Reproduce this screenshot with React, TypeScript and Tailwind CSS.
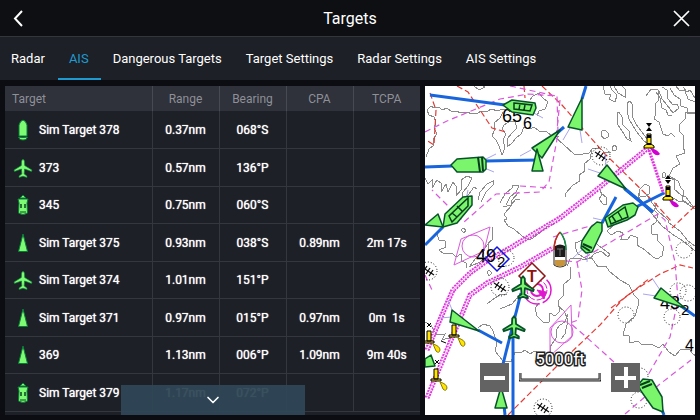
import { ChevronDown } from 'lucide-react'

type TargetKind = 'vessel' | 'aircraft' | 'tug' | 'sail'

interface Target {
  kind: TargetKind
  name: string
  range: string
  bearing: string
  cpa?: string
  tcpa?: string
}

const tabs = ['Radar', 'AIS', 'Dangerous Targets', 'Target Settings', 'Radar Settings', 'AIS Settings']

const columns = ['Range', 'Bearing', 'CPA', 'TCPA']

const targets: Target[] = [
  { kind: 'vessel', name: 'Sim Target 378', range: '0.37nm', bearing: '068°S' },
  { kind: 'aircraft', name: '373', range: '0.57nm', bearing: '136°P' },
  { kind: 'tug', name: '345', range: '0.75nm', bearing: '060°S' },
  { kind: 'sail', name: 'Sim Target 375', range: '0.93nm', bearing: '038°S', cpa: '0.89nm', tcpa: '2m 17s' },
  { kind: 'aircraft', name: 'Sim Target 374', range: '1.01nm', bearing: '151°P' },
  { kind: 'sail', name: 'Sim Target 371', range: '0.97nm', bearing: '015°P', cpa: '0.97nm', tcpa: '0m  1s' },
  { kind: 'sail', name: '369', range: '1.13nm', bearing: '006°P', cpa: '1.09nm', tcpa: '9m 40s' },
  { kind: 'tug', name: 'Sim Target 379', range: '1.17nm', bearing: '072°P' },
]

const planePath =
  'M0 -9 L1.5 -7 L1.7 -2.5 L9 2 L8.5 3.5 L1.6 1 L1.2 6 L4 8 L4 9.5 L0 8.3 L-4 9.5 L-4 8 L-1.2 6 L-1.6 1 L-8.5 3.5 L-9 2 L-1.7 -2.5 L-1.5 -7 Z'

// depth contours
const contours = [
  'M427 110 l4 -4 3 2 5 -1 3 3 5 -2 4 3 6 0 3 2 7 -1 5 2 6 -1 3 -2 6 1 4 -3 7 2 4 -2 5 0 3 -3 4 2',
  'M427 110 l2 5 5 2 2 6 -2 5 3 6 -4 5 1 6 -5 4 -3 8',
  'M503 112 l-3 6 -6 5 0 8 -2 5 4 4 3 6 3 9 3 -7 -2 -8 3 -6 -4 -5 2 -4 6 -4 5 1 2 6 -5 5 -5 6 0 8 5 -4 4 -5 5 -4 3 -7 6 2 4 -2 5 4 8 1 5 4 7 1',
  'M530 100 l3 -4 6 -3 4 5 5 4 -3 7 -6 2 -2 5',
  'M474 86 l5 4 6 -3 -2 -1',
  'M425 178 l3 6 4 -4 0 8 5 -8 4 3 0 9 5 -8 2 8 5 -10 3 4 0 10 5 -6 0 -10 6 -4 5 2 -4 8 -5 6 -1 9 4 -3 8 -11 3 2',
  'M478 200 l2 -8 7 -8 6 -3 0 4 -7 7 -5 10 M500 203 l5 -9 7 -6 1 -3 6 1 -3 6 -6 5 -4 8 M503 207 l8 -2 5 -6 4 0',
  'M519 192 l-8 9 1 4 -8 9 3 5 -3 1 4 6 6 3 8 7 7 4 4 -2 9 -7 7 -6 5 -1',
  'M437 234 l2 6 6 1 1 6 -7 3 5 4 8 -1 4 4 5 -3 1 7 4 2 0 5',
  'M492 227 l0 13 -4 3 0 12 -8 7 -11 5 7 -9 6 -1 3 -9 5 -7',
  'M555 137 l9 8 10 9 4 1 11 -2 4 -5 7 0 4 4 7 1',
  'M592 150 l-2 9 -6 5 1 7 -6 4 1 6 -7 4 -7 8 -1 4',
  'M603 86 l2 8 6 1 -2 4 6 3 2 -7 -5 -5 -2 -4 M614 86 l4 7 7 4 0 -8 -3 -3',
  'M627 103 l3 -2 3 4 -1 11 4 8 6 8 10 14 -8 -5 -8 -10 -7 -12 -2 -8 z',
  'M617 113 l2 -1 3 5 0 7 5 5 3 3 -1 4 2 5 -4 -2 -5 -8 -4 -6 z',
  'M605 130 l3 3 0 4 -4 2 -3 -4 1 -4 z',
  'M646 96 l5 -7 7 1 1 10 -4 4 1 9 -2 6 5 3 4 12 5 2 3 -3 4 4 M656 92 l4 6 2 10 4 2 2 5 4 0',
  'M662 87 l5 3 1 9 5 6 4 -1 2 4 -6 5 -6 -8 -5 -6 -3 -8 M670 88 l4 7 6 4 1 7 6 2 0 5 8 1',
  'M676 86 l3 4 6 1 3 8 7 3 M683 87 l4 5 3 -2 5 8',
  'M695 113 l-9 -1 -1 7 -6 6 0 6 5 5 -1 10 2 7 -9 3 4 8 -7 4 -4 8 9 5 3 7 3 3 -2 9 7 4',
  'M674 198 l5 4 4 -1 12 8 M668 177 l6 3 0 9 7 6 5 2 9 12',
  'M645 184 l-6 6 1 6 5 1 4 -3 0 -8 z',
  'M662 174 l2 -2 2 2 -1 3 -3 0 z M612 148 l2 -3 3 2 -1 3 -4 1 z M461 230 l2 -2 3 2 -2 3 z M487 272 l2 -2 3 3 -3 3 z',
  'M640 190 l-2 6 6 9 8 9 10 12 10 8 11 7 12 10 M646 194 l11 16 11 10 1 3 11 8 8 10 7 5',
  'M600 190 l2 5 -3 4 4 5 3 0 0 -7 -4 -3',
  'M622 222 l-7 2 -8 7 4 4 7 -4 5 2 -2 6 7 0 3 -4 7 3 -1 7 8 5 8 7 4 2 5 -3 2 -9 -7 -7 1 -5 -6 -1 -1 -8 5 -4 2 -8 -4 -4 3 -7',
  'M575 247 l0 -4 8 -3 6 5 6 -3 4 4 11 8 -2 3 -7 -6 -7 3 -4 5 -5 -1 -7 -4 z',
  'M567 266 l3 -7 9 -1 6 2 6 -3 7 10 8 -1 3 5 11 9 9 5 5 10 4 4 0 7 -3 10 -9 8 -3 11 6 1 1 7 8 -2 4 4 9 -1 8 4 4 -4 6 8 6 4 6 -7 8 0 4 5 6 4 3 6 -2 8',
  'M570 267 l0 12 -7 6 1 10 -6 6 2 10 -5 5 -5 -3 -1 9 -6 0 -6 -6 -2 -8 4 -5 M558 306 l6 5 4 9 -3 14 -4 5',
  'M425 322 l6 3 5 10 9 -1 -3 6 10 -3 M478 328 l5 -4 7 2 3 5 4 12 -2 8 8 10 8 1 4 -10 7 0 3 -2 5 4 5 -3 9 6 7 -1 -1 -9 6 -9 0 -8 4 -5 5 -3 3 -8',
  'M487 304 l8 -6 6 -4 6 1 M500 309 l12 -5 5 -6',
]

// zigzag bands marking the cable areas
const bands = [
  'M427 350 L445 308 L453 290 L470 273 L488 260 L510 248 L560 218 L595 191 L648 148',
  'M427 398 L462 314 L470 295 L487 283 L520 267 L553 248',
]

const redDashes = [
  'M457 86 L468 92 L492 128 L506 132',
  'M430 93 L436 110 L434 145 L426 140',
  'M524 86 L525 98',
  'M542 86 L562 105 L604 153 L652 200 L672 222',
  'M695 206 L672 228',
  'M611 308 L632 292 L660 274 L680 265 L693 268',
  'M508 415 L560 363 L600 325 L622 300 L650 278',
]

const magentaDashes = [
  'M425 132 L447 121 L500 99 L528 94 L557 96 L558 134 L549 182 L540 192 L496 194 L464 222 L432 190',
  'M560 100 L556 140',
  'M510 86 L556 96',
  'M556 260 L577 262 L658 214 L665 220 L675 262 L678 300 L670 337 L648 375',
  'M577 262 L582 290 L578 320 L570 323 L584 335 L645 390',
  'M553 237 L600 223',
  'M625 414 L660 384 L691 360',
  'M425 275 L432 290 M520 186 L552 188',
]

const predictors = [
  'M430 95 L505 105',
  'M425 167 L452 166 M486 161 L540 160',
  'M586 86 L582 99',
  'M425 245 L443 227',
  'M556 134 L564 127',
  'M624 188 L653 212',
  'M625 189 L653 212',
  'M616 197 L602 223',
  'M636 207 L664 193',
  'M521 293 L502 368',
  'M513 330 L513 415',
  'M478 330 L502 343',
  'M504 405 L505 415',
  'M662 410 L664 415',
  'M681 306 L695 316',
]

const trails = [
  'M496 154 L480 162 M494 172 L482 167 M531 150 L520 156 M570 128 L563 140 M580 130 L582 143 M588 169 L600 173 M605 154 L606 166 M593 218 L602 220 M573 258 L584 248 M587 262 L588 250 M652 278 L660 290 M643 294 L656 296 M448 300 L453 312 M440 318 L452 317 M465 205 L468 190 M532 112 L543 118',
]

const sails = [
  '582,98 568,127 582,130',
  '607,165 598,176 626,189',
  '560,130 532,148 542,158',
  '537,149 532,171 543,171',
  '438,214 425,225 443,227',
  '452,310 450,322 479,331',
  '501,387 495,408 507,408',
  '661,288 654,298 685,308',
  '425,359 431,355 435,366 425,367',
]

const hulls = [
  '451,165 457,159 483,157 486,160 486,169 483,172 457,172',
  '503,105 512,100 535,103 536,108 533,115 512,112',
  '472,196 472,205 457,223 443,227 445,214 463,197',
  '638,207 635,215 627,220 608,227 605,218 623,205 633,203',
  '597,222 602,223 602,231 592,252 586,253 581,248 582,241 591,227',
  '638,385 643,379 652,380 662,397 663,412 653,408 641,391',
]

const rocks = [
  { x: 601, y: 156, r: 9 },
  { x: 500, y: 287, r: 9 },
  { x: 428, y: 271, r: 9 },
  { x: 543, y: 408, r: 9 },
]

const rings = [
  { x: 684, y: 250, r: 8 },
  { x: 678, y: 291, r: 8 },
  { x: 688, y: 293, r: 8 },
  { x: 626, y: 315, r: 8 },
  { x: 672, y: 317, r: 8 },
  { x: 640, y: 376, r: 8 },
  { x: 639, y: 400, r: 8 },
  { x: 506, y: 258, r: 8 },
]

function TargetIcon({ kind }: { kind: TargetKind }) {
  return (
    <svg
      viewBox="-10 -11 20 22"
      className="h-[22px] w-5 shrink-0"
      fill="#7dfb72"
      stroke="#087c36"
      strokeWidth="1"
      aria-hidden="true"
    >
      {kind === 'vessel' && (
        <>
          <path d="M-4 6 V-5 Q-3 -9 0 -10 Q3 -9 4 -5 V6 Z" />
          <path d="M-4.500 7 Q0 8 4.500 7 L3 9.500 Q0 10.500 -3 9.500 Z" />
        </>
      )}
      {kind === 'aircraft' && <path d={planePath} strokeWidth="0.7" />}
      {kind === 'tug' && (
        <>
          <path d="M-3 -7 L0 -10 L3 -7 Z" />
          <path d="M-5 -6 H5 L4 -2 L4.500 8 Q0 11 -4.500 8 L-4 -2 Z" />
          <path d="M-2 -1 V3 M2 -1 V3" stroke="#07451f" strokeWidth="1.500" />
          <path d="M-3 7 H3" stroke="#07451f" />
        </>
      )}
      {kind === 'sail' && <path d="M0 -9 L4.500 8.500 H-4.500 Z" />}
    </svg>
  )
}

function Rock({ x, y, r }: { x: number; y: number; r: number }) {
  return (
    <g transform={`translate(${x} ${y})`} fill="none" stroke="#111">
      <circle r={r} strokeDasharray="1 2" />
      <path d="M-6 -4 L6 4 M-5 1 L-1 -5 M-2 3 L2 -3 M1 5 L5 -1" strokeWidth="1.300" />
    </g>
  )
}

function CardinalBuoy({ x, y, mark }: { x: number; y: number; mark: string }) {
  return (
    <g transform={`translate(${x} ${y})`}>
      <path d={mark} fill="#000" />
      <path d="M1 1 Q8 2 11 7 Q8 10 4 6 Z" fill="#d000d0" />
      <path d="M-2 -13 H2 V-3 L5 -1 V1 H-5 V-1 L-2 -3 Z" fill="#ffe500" stroke="#000" />
      <path d="M-2 -12 H2 V-9 H-2 Z M-2 -4 H2 V-2 H-2 Z" fill="#000" />
    </g>
  )
}

function LightBuoy({ x, y }: { x: number; y: number }) {
  return (
    <g transform={`translate(${x} ${y})`} stroke="#000" fill="#ffe500">
      <path d="M-2 -7 H2 V3 H-2 Z M-5 3 H5 V5 H-5 Z" />
      <path d="M4 6 Q11 8 11 12 Q10 16 7 13 Z" stroke="#8a7a00" />
    </g>
  )
}

function ChartDrawing() {
  return (
    <svg
      viewBox="425 86 270 329"
      preserveAspectRatio="xMidYMid slice"
      className="absolute inset-0 h-full w-full"
      role="img"
      aria-label="Chart with AIS targets"
    >
      <g fill="none" stroke="#8b8b8b" shapeRendering="crispEdges">
        {contours.map((d) => (
          <path key={d} d={d} />
        ))}
      </g>
      <g fill="none" stroke="#e23b35" strokeDasharray="6 3" strokeWidth="1.200">
        {redDashes.map((d) => (
          <path key={d} d={d} />
        ))}
      </g>
      <g fill="none" stroke="#d958dc" strokeDasharray="6 4" strokeWidth="1.200">
        {magentaDashes.map((d) => (
          <path key={d} d={d} />
        ))}
      </g>
      {bands.map((d) => (
        <g key={d} fill="none">
          <path d={d} stroke="#e22fe0" strokeWidth="5" strokeDasharray="2 1" />
          <path d={d} stroke="#fff" strokeWidth="1.500" strokeDasharray="1.500 1.500" />
        </g>
      ))}
      <path d="M649 150 L664 195" fill="none" stroke="#e22fe0" strokeWidth="3" strokeDasharray="2 1" />

      <g fill="none" stroke="#d95bdc">
        <circle cx="473" cy="246" r="11" />
        <path d="M490 227 L461 239 L454 265 L484 251 Z" />
        <circle cx="562" cy="332" r="11" />
        <path d="M571 305 L550 328 V356 L572 336 Z" />
      </g>

      {rings.map((ring) => (
        <circle key={`${ring.x}-${ring.y}`} cx={ring.x} cy={ring.y} r={ring.r} fill="none" stroke="#222" strokeDasharray="1 2" />
      ))}
      {rocks.map((rock) => (
        <Rock key={`${rock.x}-${rock.y}`} {...rock} />
      ))}

      <g fill="none" stroke="#a9a5ee">
        {trails.map((d) => (
          <path key={d} d={d} />
        ))}
      </g>
      <g fill="none" stroke="#1764dc" strokeWidth="3">
        {predictors.map((d) => (
          <path key={d} d={d} />
        ))}
      </g>

      {/* racon */}
      <g fill="none" stroke="#df18cf">
        <circle cx="537" cy="290" r="14" strokeWidth="1.500" strokeDasharray="16 3" />
        <circle cx="537" cy="290" r="10" strokeDasharray="7 2" />
        <circle cx="537" cy="290" r="6" strokeWidth="2" />
        <path d="M537 290 L546 292 L544 299 Z" fill="#df18cf" />
      </g>
      <path d="M532 263 L545 276 L532 289 L519 276 Z" fill="#fff" stroke="#8f1414" strokeWidth="1.500" />
      <path d="M497 247 L509 259 L497 271 L485 259 Z" fill="none" stroke="#1414d8" strokeWidth="1.500" />

      <CardinalBuoy x={649} y={147} mark="M-3 -24 H3 L0 -20 Z M0 -20 L3 -16 H-3 Z" />
      <CardinalBuoy x={668} y={199} mark="M0 -24 L3 -20 H-3 Z M-3 -19 H3 L0 -15 Z" />
      <LightBuoy x={429} y={338} />
      <LightBuoy x={454} y={332} />
      <LightBuoy x={436} y={376} />
      <path d="M427 323 l4 4 m0 -4 l-4 4 M435 360 l4 4 m0 -4 l-4 4 M441 341 l5 2" stroke="#000" />

      <g className="font-['Liberation_Sans',sans-serif]" fill="#000">
        <text x="502" y="122" fontSize="18">65</text>
        <text x="523" y="129" fontSize="16">6</text>
        <text x="476" y="262" fontSize="18">49</text>
        <text x="497" y="267" fontSize="15">2</text>
        <text x="660" y="309" fontSize="18">43</text>
        <text x="681" y="315" fontSize="15">2</text>
        <text x="685" y="351" fontSize="16">4</text>
        <text x="527" y="282" fontSize="16" fontWeight="bold" fill="#8f1414">T</text>
      </g>

      <g fill="#7bf56b" stroke="#075329" strokeWidth="1.500" strokeLinejoin="round">
        {sails.map((points) => (
          <polygon key={points} points={points} />
        ))}
        {hulls.map((points) => (
          <polygon key={points} points={points} />
        ))}
        <path d={planePath} transform="translate(523 287) scale(1.2)" />
        <path d={planePath} transform="translate(514 327) scale(1.2)" />
      </g>
      {/* superstructures */}
      <g fill="none" stroke="#063d1f" strokeWidth="1.500">
        <path d="M478 157 L480 172 M482 157 L483 171" strokeWidth="2" />
        <path d="M514 103 L532 105 L530 111 L514 109 Z M520 103 L519 110 M525 105 L524 110" />
        <path d="M468 198 L449 216 L452 222 L468 206 Z M457 206 L462 211 M452 213 L457 217" />
        <path d="M625 207 L609 218 L611 224 L628 217 Z M612 216 L616 222 M618 212 L622 219" />
        <path d="M583 244 L592 248 M582 246 L590 251" strokeWidth="2" />
        <path d="M640 385 L650 381 M642 388 L652 384" strokeWidth="2" />
      </g>

      {/* own ship */}
      <g>
        <path d="M560 232 Q566 239 566 251 V265 Q560 269 554 265 V251 Q554 239 560 232 Z" fill="#fff" stroke="#222" />
        <path d="M560 232 Q566 239 566 250" fill="none" stroke="#178a44" strokeWidth="1.500" />
        <path d="M560 232 Q554 239 554 250" fill="none" stroke="#c52a22" strokeWidth="1.500" />
        <path d="M555 246 Q560 243 565 246 V257 H555 Z" fill="#1b1b1b" />
        <path d="M557 249 H563 M560 249 V256" stroke="#777" />
        <path d="M555 260 H565 V265 Q560 268 555 265 Z" fill="#c9953c" />
      </g>
    </svg>
  )
}

function ZoomButton({ label, children }: { label: string; children: React.ReactNode }) {
  return (
    <button type="button" aria-label={label} className="flex h-[29px] w-[29px] items-center justify-center bg-[#636363]">
      <svg viewBox="0 0 29 29" className="h-full w-full" stroke="#fff" strokeWidth="4">
        {children}
      </svg>
    </button>
  )
}

function ChartPanel() {
  return (
    <section className="relative overflow-hidden bg-white">
      <ChartDrawing />
      <div className="absolute inset-x-0 bottom-[23px] flex items-end justify-center gap-[10px]">
        <ZoomButton label="Zoom out">
          <path d="M4 15 H25" />
        </ZoomButton>
        <div className="flex w-[82px] flex-col items-center pb-[10px]">
          <span className="text-[17px] leading-[20px] text-white [-webkit-text-stroke:3px_#222] [paint-order:stroke_fill]">
            5000ft
          </span>
          <svg viewBox="0 0 82 9" className="mt-1 h-[9px] w-full" fill="none" aria-hidden="true">
            <path d="M1 0 V7 H81 V0" stroke="#222" strokeWidth="3" />
            <path d="M1 0 V7 H81 V0" stroke="#bbb" strokeWidth="1" />
          </svg>
        </div>
        <ZoomButton label="Zoom in">
          <path d="M4 15 H25 M15 4 V25" />
        </ZoomButton>
      </div>
    </section>
  )
}

function TargetTable() {
  return (
    <section className="relative overflow-hidden bg-[#1d2026]">
      <table className="w-full table-fixed border-collapse text-[12px] leading-[16px]">
        <thead>
          <tr className="h-[25px] bg-[#2f313b] text-[#8e9097]">
            <th scope="col" className="pl-[7px] text-left font-normal">
              Target
            </th>
            {columns.map((column) => (
              <th key={column} scope="col" className="w-[67px] border-l border-[#474a53] text-center font-normal">
                {column}
              </th>
            ))}
          </tr>
        </thead>
        <tbody className="font-normal text-white [text-shadow:0_0_1px_#fff]">
          {targets.map((target) => (
            <tr key={target.name} className="border-b border-[#34373d] odd:h-[37px] even:h-[38px]">
              <td className="pt-px">
                <div className="flex items-center gap-[6px] pl-2">
                  <TargetIcon kind={target.kind} />
                  {target.name}
                </div>
              </td>
              {[target.range, target.bearing, target.cpa, target.tcpa].map((value, i) => (
                <td key={columns[i]} className="border-l border-[#34373d] pt-px text-center whitespace-pre">
                  {value}
                </td>
              ))}
            </tr>
          ))}
        </tbody>
      </table>
      <button
        type="button"
        aria-label="Scroll down"
        className="absolute bottom-0 left-1/2 flex h-[30px] w-[184px] -translate-x-1/2 items-center justify-center bg-[#2f4756]/95 text-white"
      >
        <ChevronDown size={20} strokeWidth={2} />
      </button>
    </section>
  )
}

export default function App() {
  return (
    <div className="flex min-h-screen flex-col bg-[#0b0d12] font-['Roboto',sans-serif] text-white">
      <header className="flex h-9 items-center justify-between bg-[#0d0f12] px-2 pt-[2px]">
        <button type="button" aria-label="Back" className="flex h-5 w-5 items-center justify-center">
          <svg viewBox="0 0 20 20" className="h-5 w-5" fill="none" stroke="#fff" strokeWidth="2">
            <path d="M14 2 L7 9.500 L14 17" />
          </svg>
        </button>
        <h1 className="text-[16px] leading-[20px]">Targets</h1>
        <button type="button" aria-label="Close" className="flex h-5 w-5 items-center justify-center">
          <svg viewBox="0 0 20 20" className="h-5 w-5" fill="none" stroke="#fff" strokeWidth="1.700">
            <path d="M2 2 L17 17 M17 2 L2 17" />
          </svg>
        </button>
      </header>

      <nav className="flex h-11 gap-px border-t border-[#34363c] bg-[#1d2026] text-[13px] leading-[16px]">
        {tabs.map((tab) => (
          <button
            key={tab}
            type="button"
            aria-current={tab === 'AIS' ? 'page' : undefined}
            className={
              tab === 'AIS'
                ? 'border-b-2 border-[#1d9bd1] pr-3 pl-[11px] pt-[2px] text-[#1d9bd1]'
                : 'border-b-2 border-transparent pr-3 pl-[11px] pt-[2px]'
            }
          >
            {tab}
          </button>
        ))}
      </nav>

      <main className="grid flex-1 grid-cols-[83fr_54fr] gap-[5px] px-[5px] pt-[6px] pb-[5px]">
        <TargetTable />
        <ChartPanel />
      </main>
    </div>
  )
}
